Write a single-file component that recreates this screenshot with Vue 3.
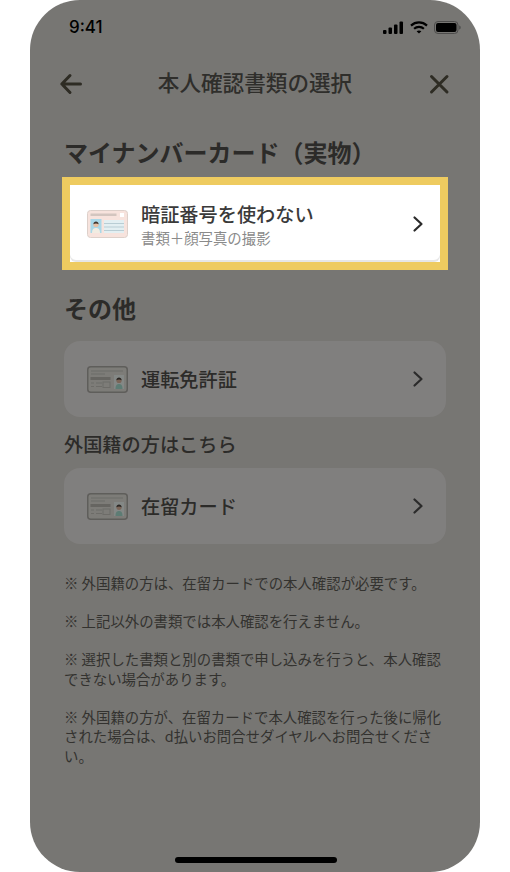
<script setup>
const notes = [
  "※ 外国籍の方は、在留カードでの本人確認が必要です。",
  "※ 上記以外の書類では本人確認を行えません。",
  "※ 選択した書類と別の書類で申し込みを行うと、本人確認できない場合があります。",
  "※ 外国籍の方が、在留カードで本人確認を行った後に帰化された場合は、d払いお問合せダイヤルへお問合せください。",
];
</script>

<template>
  <div class="page">
    <div class="phone">
      <div class="status">
        <span class="time">9:41</span>
        <div class="status-icons">
          <svg width="21" height="13" viewBox="0 0 21 13">
            <rect x="0" y="9" width="3.5" height="4" rx="1" fill="#000" />
            <rect x="5.5" y="6.5" width="3.5" height="6.5" rx="1" fill="#000" />
            <rect x="11" y="3.5" width="3.5" height="9.5" rx="1" fill="#000" />
            <rect x="16.5" y="0.5" width="3.5" height="12.5" rx="1" fill="#000" />
          </svg>
          <svg width="18" height="13" viewBox="0 0 18 13" fill="none" stroke="#000" stroke-width="2.2">
            <path d="M1 4.6C5.6 .4 12.4 .4 17 4.6" />
            <path d="M4.1 7.8c2.8-2.5 7-2.5 9.8 0" />
            <path d="M9 12.6l-2.4-2.4c1.4-1 3.4-1 4.8 0z" fill="#000" stroke="none" />
          </svg>
          <svg width="27" height="13" viewBox="0 0 27 13">
            <rect x="0.5" y="0.5" width="23.5" height="12" rx="3.5" fill="none" stroke="#4d4c4b" />
            <rect x="2" y="2" width="20.5" height="9" rx="2" fill="#000" />
            <path d="M25.2 4.5c1 .3 1.5 1.1 1.5 2s-.5 1.7-1.5 2z" fill="#4d4c4b" />
          </svg>
        </div>
      </div>

      <header class="nav">
        <svg width="24" height="24" viewBox="0 0 24 24" fill="none" stroke="#2e2c24" stroke-width="3" stroke-linecap="round" stroke-linejoin="round">
          <path d="M21.5 12H3M11 3.5L2.8 12l8.2 8.5" />
        </svg>
        <h1>本人確認書類の選択</h1>
        <svg width="24" height="24" viewBox="0 0 24 24" fill="none" stroke="#2e2c24" stroke-width="3" stroke-linecap="round">
          <path d="M4.5 4.5l15.500 15.500M20 4.500L4.500 20" />
        </svg>
      </header>

      <main class="content">
        <h2 class="heading">マイナンバーカード（実物）</h2>
        <div class="highlight">
          <button class="row row-active">
            <svg class="card-icon" width="41" height="28" viewBox="0 0 41 28">
              <rect x="0.5" y="0.5" width="40" height="27" rx="3" fill="#f7e3dd" stroke="#ddd0ca" />
              <rect x="3.500" y="3.500" width="26" height="2.500" fill="#d3c5bf" />
              <rect x="33" y="3" width="4" height="4" fill="#fff" />
              <rect x="3.500" y="9" width="11" height="14" fill="#a9d8e8" />
              <path d="M5 23c0-4 1.800-5 4-5s4 1 4 5z" fill="#f1ece2" />
              <circle cx="9" cy="14.500" r="2.600" fill="#e8c0a4" />
              <path d="M6.400 14.200c0-3.600 5.200-3.600 5.200 0-1.700-1-3.500-1-5.200 0z" fill="#3f352e" />
              <rect x="17" y="10" width="20" height="13" fill="#e3eff2" />
              <path d="M17 13.500h20M17 17h20M17 20.500h20" stroke="#b9cdd4" stroke-width="1" />
            </svg>
            <span class="row-text">
              <span class="row-title">暗証番号を使わない</span>
              <span class="row-sub">書類＋顔写真の撮影</span>
            </span>
            <svg class="chevron" width="12" height="18" viewBox="0 0 12 18" fill="none" stroke="#2b2b2b" stroke-width="2.200" stroke-linecap="round" stroke-linejoin="round">
              <path d="M2.500 2.500L9.500 9l-7 6.500" />
            </svg>
          </button>
        </div>

        <h2 class="heading other">その他</h2>
        <button class="row">
          <svg class="card-icon" width="41" height="27" viewBox="0 0 41 27">
            <rect x="0.750" y="0.750" width="39.500" height="25.500" rx="3" fill="#7d7c78" stroke="#5f5e5b" stroke-width="1.500" />
            <path d="M4 5h32M4 8h14" stroke="#6d6c68" stroke-width="1.200" />
            <rect x="3.500" y="11" width="20" height="3" fill="#666561" />
            <path d="M4 17h3M9 17h6M4 20.500h3M9 20.500h6" stroke="#6d6c68" stroke-width="1.200" />
            <rect x="16" y="16" width="7" height="5.500" fill="none" stroke="#6d6c68" stroke-width="1" />
            <rect x="27" y="9" width="10" height="14" fill="#848886" />
            <path d="M28.500 23c0-4 1.500-5 3.500-5s3.500 1 3.500 5z" fill="#5d7c74" />
            <circle cx="32" cy="14.500" r="2.600" fill="#7b6558" />
            <path d="M29.400 14.200c0-3.600 5.200-3.600 5.200 0-1.700-1-3.500-1-5.200 0z" fill="#2a2623" />
          </svg>
          <span class="row-title">運転免許証</span>
          <svg class="chevron" width="12" height="18" viewBox="0 0 12 18" fill="none" stroke="#2b2b2b" stroke-width="2.200" stroke-linecap="round" stroke-linejoin="round">
            <path d="M2.500 2.500L9.500 9l-7 6.500" />
          </svg>
        </button>

        <h3 class="subheading">外国籍の方はこちら</h3>
        <button class="row">
          <svg class="card-icon" width="41" height="27" viewBox="0 0 41 27">
            <rect x="0.750" y="0.750" width="39.500" height="25.500" rx="3" fill="#7d7c78" stroke="#5f5e5b" stroke-width="1.500" />
            <path d="M4 5h32M4 8h14" stroke="#6d6c68" stroke-width="1.200" />
            <rect x="3.500" y="11" width="20" height="3" fill="#666561" />
            <path d="M4 17h3M9 17h6M4 20.500h3M9 20.500h6" stroke="#6d6c68" stroke-width="1.200" />
            <rect x="16" y="16" width="7" height="5.500" fill="none" stroke="#6d6c68" stroke-width="1" />
            <rect x="27" y="9" width="10" height="14" fill="#848886" />
            <path d="M28.500 23c0-4 1.500-5 3.500-5s3.500 1 3.500 5z" fill="#5d7c74" />
            <circle cx="32" cy="14.500" r="2.600" fill="#7b6558" />
            <path d="M29.400 14.200c0-3.600 5.200-3.600 5.200 0-1.700-1-3.500-1-5.200 0z" fill="#2a2623" />
          </svg>
          <span class="row-title">在留カード</span>
          <svg class="chevron" width="12" height="18" viewBox="0 0 12 18" fill="none" stroke="#2b2b2b" stroke-width="2.200" stroke-linecap="round" stroke-linejoin="round">
            <path d="M2.500 2.500L9.500 9l-7 6.500" />
          </svg>
        </button>

        <div class="notes">
          <p v-for="note in notes" :key="note">{{ note }}</p>
        </div>
      </main>

      <div class="home-bar"></div>
    </div>
  </div>
</template>

<style scoped>
.page {
  width: 510px;
  height: 872px;
  background: #fff;
  padding: 0 30px;
  box-sizing: border-box;
  font-family: "Noto Sans CJK JP", "Noto Sans", sans-serif;
}

.phone {
  position: relative;
  height: 872px;
  background: #777673;
  border-radius: 50px;
  overflow: hidden;
}

.status {
  height: 54px;
  padding: 0 19px 0 39px;
  display: flex;
  align-items: center;
  justify-content: space-between;
}

.time {
  font-family: Inter, "Liberation Sans", sans-serif;
  font-size: 17px;
  font-weight: 500;
  color: #000;
}

.status-icons {
  display: flex;
  align-items: center;
  gap: 6px;
}

.nav {
  height: 60px;
  padding: 0 29px;
  display: flex;
  align-items: center;
  justify-content: space-between;
}

.nav h1 {
  margin: -4px 0 0;
  font-size: 21.600px;
  font-weight: 500;
  line-height: 30px;
  color: #2f2e2b;
}

.content {
  padding: 21px 34px 0;
}

.heading {
  margin: 0;
  font-size: 24px;
  font-weight: 700;
  line-height: 34px;
  color: #2c2b29;
}

.highlight {
  margin: 8px -2px 0;
  border: 8px solid #eecb60;
  background: #fff;
}

.row {
  width: 100%;
  height: 76px;
  padding: 0 22px 0 23px;
  display: flex;
  align-items: center;
  border: 0;
  border-radius: 16px;
  background: #807f7e;
  text-align: left;
  font-family: inherit;
  color: #2c2b29;
}

.row-active {
  width: 370px;
  height: 77px;
  padding: 0 16px 0 17px;
  border-radius: 2px 2px 6px 6px;
  background: #fff;
  box-shadow: inset 0 -2px 0 #e6e6e6;
  color: #3a3a3a;
}

.card-icon {
  flex: none;
  margin-right: 13px;
}

.row-text {
  display: flex;
  flex-direction: column;
  padding-top: 2px;
}

.row-title {
  font-size: 19.200px;
  font-weight: 500;
  line-height: 26px;
}

.row-sub {
  font-size: 14.400px;
  line-height: 22px;
  color: #8a8a8a;
}

.chevron {
  flex: none;
  margin-left: auto;
}

.other {
  margin-top: 21px;
  margin-bottom: 16px;
}

.subheading {
  margin: 13px 0 10px;
  font-size: 19.200px;
  font-weight: 500;
  line-height: 28px;
  color: #2c2b29;
}

.notes {
  margin-top: 29px;
  font-size: 14.400px;
  line-height: 19.500px;
  color: #33322f;
}

.notes p {
  margin: 0 0 18.500px;
}

.home-bar {
  position: absolute;
  left: 145px;
  bottom: 9px;
  width: 162px;
  height: 6px;
  border-radius: 3px;
  background: #000;
}
</style>
